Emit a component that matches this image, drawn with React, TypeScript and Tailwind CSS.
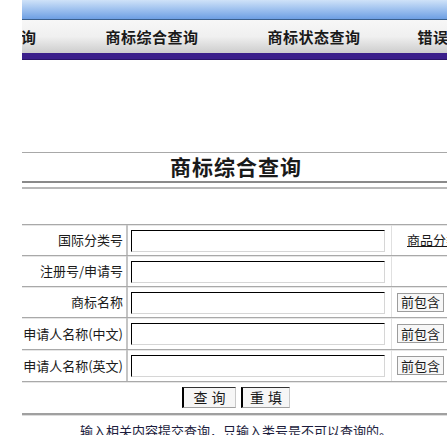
import React from "react";

const cjk = { fontFamily: '"Noto Sans CJK SC", "Noto Sans", sans-serif' };

const navItems = ["商标注册查询", "商标综合查询", "商标状态查询", "错误信息查询"];

const rows: { label: string; extra: "link" | "btn" | null }[] = [
  { label: "国际分类号", extra: "link" },
  { label: "注册号/申请号", extra: null },
  { label: "商标名称", extra: "btn" },
  { label: "申请人名称(中文)", extra: "btn" },
  { label: "申请人名称(英文)", extra: "btn" },
];

function Field() {
  return (
    <div className="h-[22px] w-[254px] border border-t-black border-l-black border-r-[#d6d6d6] border-b-[#d6d6d6] bg-white" />
  );
}

export default function App() {
  return (
    <div className="w-[447px] h-[435px] overflow-hidden bg-white text-[#1a1a1a]" style={cjk}>
      <div className="ml-[22px] w-[428px]">
        {/* top nav */}
        <div className="h-[19px] bg-gradient-to-b from-[#cfe2f8] to-[#6d9fe3]" />
        <div className="h-px bg-[#3a5f8c]" />
        <div className="h-[33px] bg-gradient-to-b from-[#f7f7f7] via-[#f0f0f0] to-[#cdcdcd] overflow-hidden">
          <div className="flex h-full items-center ml-[-113px]">
            {navItems.map((n, i) => (
              <div
                key={n}
                className={`w-[162px] shrink-0 text-center text-[15px] font-bold leading-none tracking-[0.5px] ${i === 3 ? "ml-[-12px]" : ""}`}
              >
                {n}
              </div>
            ))}
          </div>
        </div>
        <div className="h-[7px] bg-[#3b1f8b] border-b border-[#2a1468]" />

        {/* title */}
        <div className="mt-[92px] border-t border-[#a8a8a8] h-[29px] flex items-center justify-center text-[21px] font-bold tracking-[1px]">
          商标综合查询
        </div>
        <div className="h-[2px] bg-[#8a8a8a]" />
        <div className="mt-[4px] h-[2px] bg-[#b8b8b8]" />

        {/* form */}
        <div className="mt-[35px]">
          {rows.map((r, i) => (
            <div
              key={r.label}
              className={`grid grid-cols-[106px_263px_59px] border-t border-[#a9a9a9] shadow-[inset_0_1px_0_#e6e6e6] ${i < 3 ? "h-[31px]" : "h-[32px]"}`}
            >
              <div className="flex items-center justify-end pr-[3px] text-[13px] border-r-2 border-[#c4c4c4]">
                {r.label}
              </div>
              <div className="flex items-center pl-[3px] pt-[1px]">
                <Field />
              </div>
              <div className="flex items-center pl-[5px] border-l border-[#e0e0e0]">
                {r.extra === "link" && (
                  <span className="pl-[10px] text-[13px] underline whitespace-nowrap">商品分类表</span>
                )}
                {r.extra === "btn" && (
                  <span className="h-[19px] px-[3px] flex items-center border border-[#9c9c9c] bg-[#f7f7f7] text-[13px] whitespace-nowrap">
                    前包含
                  </span>
                )}
              </div>
            </div>
          ))}
          <div className="h-[32px] border-t border-[#a9a9a9] shadow-[inset_0_1px_0_#e6e6e6] flex items-center justify-center gap-[5px]">
            <span className="w-[54px] h-[21px] flex items-center justify-center border border-t-[#333] border-l-2 border-l-black border-r-[#c8c8c8] border-b-[#a0a0a0] bg-[#f6f6f6] text-[14px] tracking-[4px] pl-[4px]">
              查询
            </span>
            <span className="w-[49px] h-[21px] flex items-center justify-center border border-t-[#333] border-l-2 border-l-black border-r-[#c8c8c8] border-b-[#a0a0a0] bg-[#f6f6f6] text-[14px] tracking-[4px] pl-[4px]">
              重填
            </span>
          </div>
          <div className="h-[2px] bg-[#a0a0a0]" />
          <div className="h-px bg-[#dcdcdc]" />
          <div className="mt-[7px] text-center text-[13px] leading-[16px] text-[#1c1c3c]">
            输入相关内容提交查询，只输入类号是不可以查询的。
          </div>
        </div>
      </div>
    </div>
  );
}
